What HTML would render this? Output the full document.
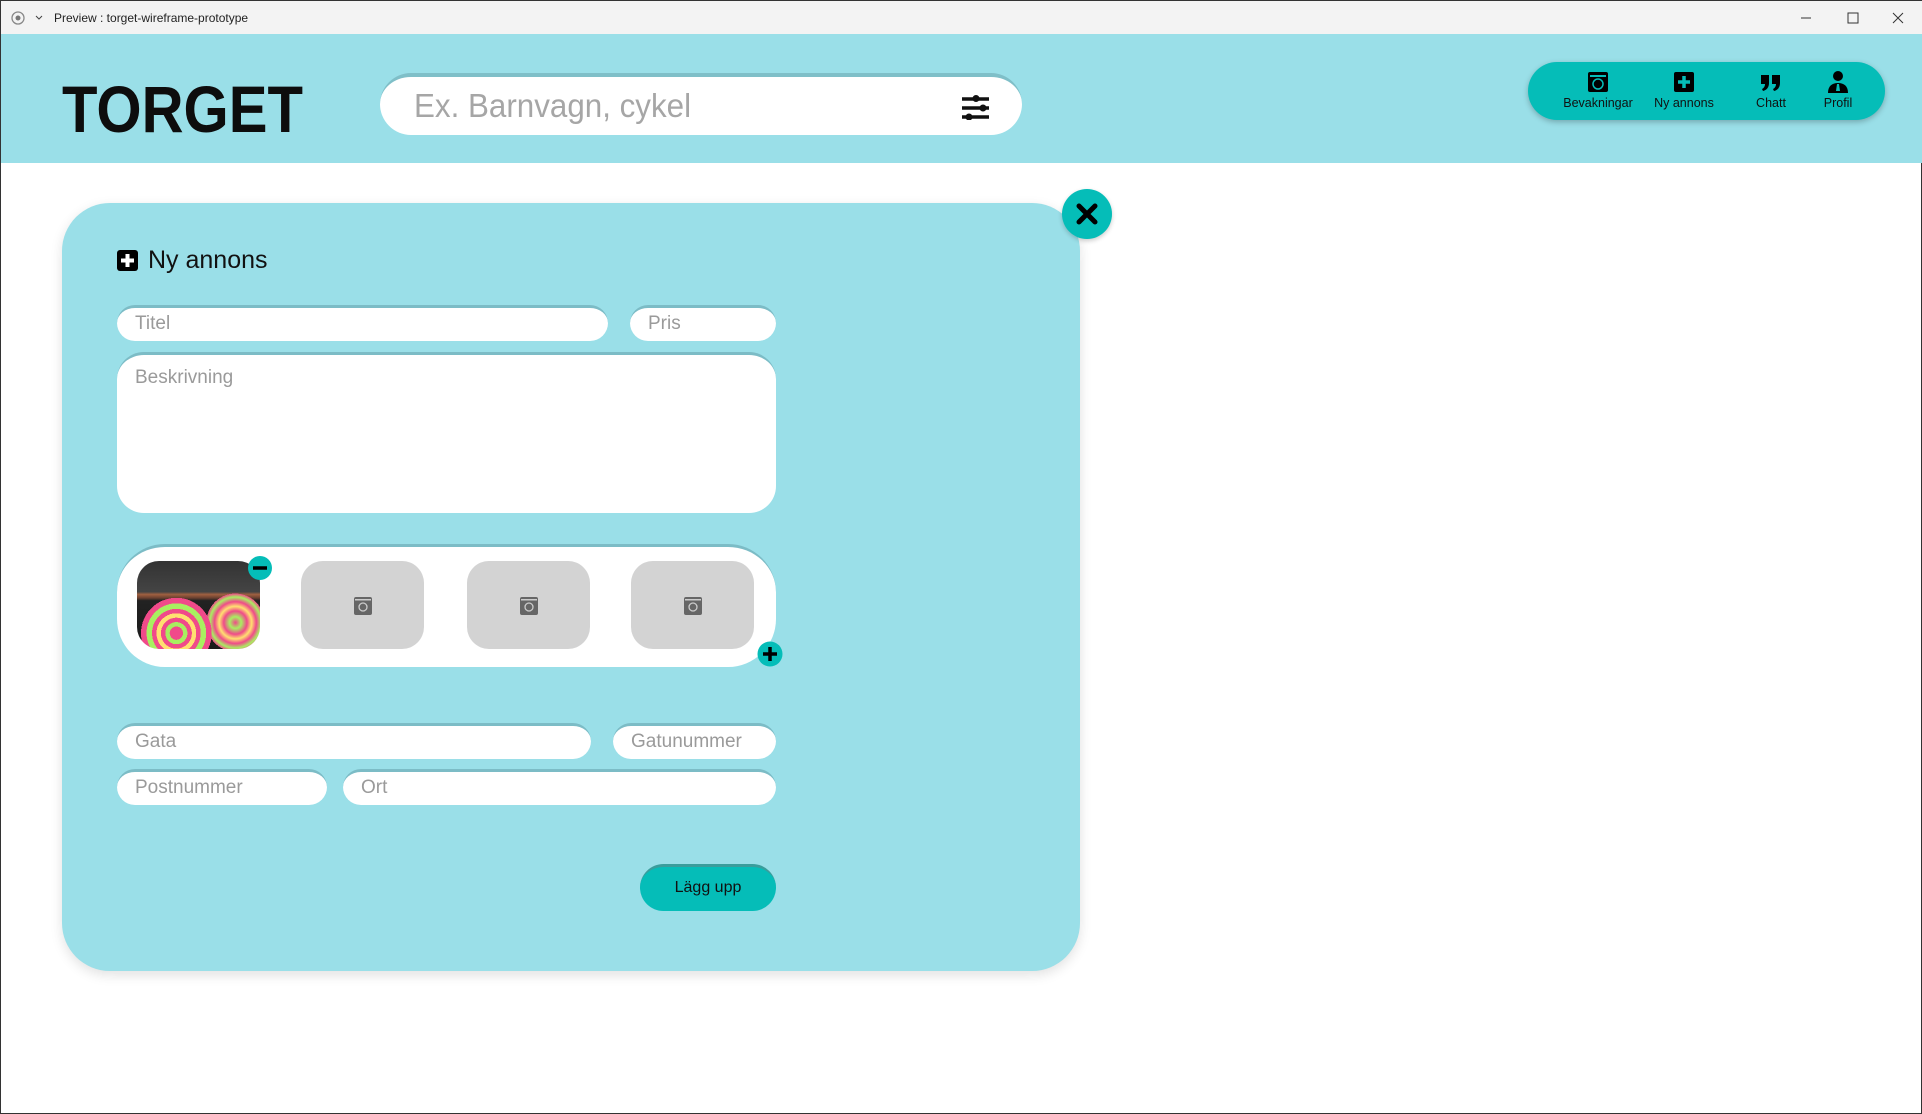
<!DOCTYPE html>
<html><head><meta charset="utf-8">
<style>
*{box-sizing:border-box;margin:0;padding:0}
body{width:1922px;height:1114px;background:#fff;font-family:"Liberation Sans","DejaVu Sans",sans-serif;position:relative;overflow:hidden;border:1px solid #333}
.abs{position:absolute}
.tb{left:0;top:0;width:1922px;height:33px;background:#f3f3f3;font-size:12px;color:#222}
.hdr{left:0;top:33px;width:1922px;height:129px;background:#9adfe8}
.logo{left:61px;top:70px;font-size:66px;font-weight:bold;color:#0d0d0d;transform:scaleX(0.88);transform-origin:0 0}
.search{left:379px;top:72px;width:642px;height:62px;background:#fff;border-radius:31px;border-top:4px solid #7fbfc8}
.search span{position:absolute;left:34px;top:10px;font-size:33px;color:#a6a6a6;transform:scaleX(0.95);transform-origin:0 0}
.nav{left:1527px;top:61px;width:357px;height:58px;background:#05bdb8;border-radius:29px;box-shadow:0 2px 6px rgba(0,0,0,.25)}
.ni{position:absolute;top:9px;width:90px;margin-left:-45px;text-align:center;font-size:12.5px;color:#111}
.ni svg{display:block;margin:0 auto 3px}
.card{left:61px;top:202px;width:1018px;height:768px;background:#9adfe8;border-radius:48px;box-shadow:0 4px 12px rgba(0,0,0,.12)}
.close{left:1061px;top:188px;width:50px;height:50px;border-radius:50%;background:#05bdb8;box-shadow:0 2px 5px rgba(0,0,0,.2)}
.inp{background:#fff;border-radius:18px;border-top:3px solid #7cbcc6;font-size:19px;color:#9a9a9a;padding:5px 0 0 18px}
.thumb{top:560px;width:123px;height:88px;border-radius:22px;background:#d3d3d3}
.thumb svg{position:absolute;left:52px;top:35px}
</style></head><body>
<div class="abs tb">
 <svg class="abs" style="left:10px;top:10px" width="14" height="14"><circle cx="7" cy="7" r="6" fill="none" stroke="#888" stroke-width="1.3"/><circle cx="7" cy="7" r="2.5" fill="#777"/></svg>
 <svg class="abs" style="left:34px;top:14px" width="8" height="6"><path d="M1 1l3 3 3-3" stroke="#444" fill="none"/></svg>
 <span class="abs" style="left:53px;top:10px">Preview : torget-wireframe-prototype</span>
 <svg class="abs" style="left:1800px;top:11px" width="110" height="12"><path d="M0 6h10" stroke="#333"/><rect x="47" y="1" width="10" height="10" fill="none" stroke="#333"/><path d="M92 1l10 10M102 1L92 11" stroke="#333"/></svg>
</div>
<div class="abs hdr"></div>
<div class="abs logo">TORGET</div>
<div class="abs search"><span>Ex. Barnvagn, cykel</span>
 <svg class="abs" style="left:580px;top:17px" width="32" height="26"><g stroke="#111" stroke-width="3.5"><path d="M2 5h27M2 14h27M2 23h27"/></g><circle cx="16" cy="4.5" r="3.5" fill="#111"/><circle cx="23" cy="14" r="3.5" fill="#111"/><circle cx="9" cy="23" r="3.5" fill="#111"/></svg>
</div>
<div class="abs nav">
 <div class="ni" style="left:70px"><svg width="22" height="22"><rect x="1" y="1" width="20" height="20" rx="2" fill="#000"/><rect x="3" y="4" width="16" height="2" fill="#05bdb8"/><circle cx="11" cy="13" r="5" fill="none" stroke="#05bdb8" stroke-width="1.5"/></svg>Bevakningar</div>
 <div class="ni" style="left:156px"><svg width="22" height="22"><rect x="1" y="1" width="20" height="20" rx="2" fill="#000"/><path d="M11 5v12M5 11h12" stroke="#05bdb8" stroke-width="3.5"/></svg>Ny annons</div>
 <div class="ni" style="left:243px"><svg width="22" height="22"><path d="M1 4h8v8c0 4-2 7-6 8l-1-2c2-1 3-3 3-5H1zM12 4h8v8c0 4-2 7-6 8l-1-2c2-1 3-3 3-5h-4z" fill="#000"/></svg>Chatt</div>
 <div class="ni" style="left:310px"><svg width="22" height="22"><circle cx="11" cy="5" r="5" fill="#000"/><path d="M1 22c0-7 4-10 10-10s10 3 10 10z" fill="#000"/><path d="M10 13h2l1 7h-4z" fill="#05bdb8"/></svg>Profil</div>
</div>
<div class="abs card"></div>
<div class="abs close"><svg width="50" height="50"><path d="M17 17l16 16M33 17L17 33" stroke="#000" stroke-width="5" stroke-linecap="round"/></svg></div>
<svg class="abs" style="left:116px;top:249px" width="21" height="21"><rect x="0" y="0" width="21" height="21" rx="3" fill="#000"/><path d="M10.5 4v13M4 10.5h13" stroke="#fff" stroke-width="4"/></svg>
<div class="abs" style="left:147px;top:245px;font-size:25px;color:#111">Ny annons</div>
<div class="abs inp" style="left:116px;top:304px;width:491px;height:36px">Titel</div>
<div class="abs inp" style="left:629px;top:304px;width:146px;height:36px">Pris</div>
<div class="abs inp" style="left:116px;top:351px;width:659px;height:161px;border-radius:27px;padding-top:12px">Beskrivning</div>
<div class="abs" style="left:116px;top:543px;width:659px;height:123px;background:#fff;border-radius:48px;border-top:3px solid #7cbcc6"></div>
<div class="abs thumb" style="left:136px;overflow:hidden;background:
radial-gradient(circle at 32% 82%,#f04a8a 0,#f04a8a 6%,#a8ef60 6%,#a8ef60 10%,#f04a8a 10%,#f04a8a 14%,#ffe070 14%,#ffe070 18%,#f04a8a 18%,#f04a8a 22%,#a8ef60 22%,#a8ef60 27%,#f04a8a 27%,#f04a8a 32%,transparent 32%),
radial-gradient(circle at 80% 70%,#f04a8a 0,#a8ef60 5%,#f04a8a 10%,#ffe070 14%,#f04a8a 18%,#a8ef60 22%,#f04a8a 25%,transparent 25%),
linear-gradient(180deg,#333 0,#444 35%,#a06040 38%,#6a4030 42%,#222 45%,#1a1a1a 100%)"></div>
<div class="abs thumb" style="left:300px"><svg width="20" height="20"><rect x="1" y="1" width="18" height="18" rx="2" fill="#666"/><rect x="2" y="3" width="16" height="1.5" fill="#ccc"/><circle cx="10" cy="11" r="4" fill="none" stroke="#ccc" stroke-width="1.3"/></svg></div>
<div class="abs thumb" style="left:466px"><svg width="20" height="20"><rect x="1" y="1" width="18" height="18" rx="2" fill="#666"/><rect x="2" y="3" width="16" height="1.5" fill="#ccc"/><circle cx="10" cy="11" r="4" fill="none" stroke="#ccc" stroke-width="1.3"/></svg></div>
<div class="abs thumb" style="left:630px"><svg width="20" height="20"><rect x="1" y="1" width="18" height="18" rx="2" fill="#666"/><rect x="2" y="3" width="16" height="1.5" fill="#ccc"/><circle cx="10" cy="11" r="4" fill="none" stroke="#ccc" stroke-width="1.3"/></svg></div>
<svg class="abs" style="left:246px;top:554px" width="26" height="26"><circle cx="13" cy="13" r="12" fill="#05bdb8"/><path d="M6 13h14" stroke="#000" stroke-width="3.5"/></svg>
<svg class="abs" style="left:756px;top:640px" width="26" height="26"><circle cx="13" cy="13" r="12.5" fill="#05bdb8"/><path d="M6 13h14M13 6v14" stroke="#000" stroke-width="3.5"/></svg>
<div class="abs inp" style="left:116px;top:722px;width:474px;height:36px">Gata</div>
<div class="abs inp" style="left:612px;top:722px;width:163px;height:36px">Gatunummer</div>
<div class="abs inp" style="left:116px;top:768px;width:210px;height:36px">Postnummer</div>
<div class="abs inp" style="left:342px;top:768px;width:433px;height:36px">Ort</div>
<div class="abs" style="left:639px;top:863px;width:136px;height:47px;background:#05bdb8;border-radius:24px;border-top:3px solid #3a9d9c;text-align:center;line-height:42px;font-size:16px;color:#111">Lägg upp</div>
</body></html>
